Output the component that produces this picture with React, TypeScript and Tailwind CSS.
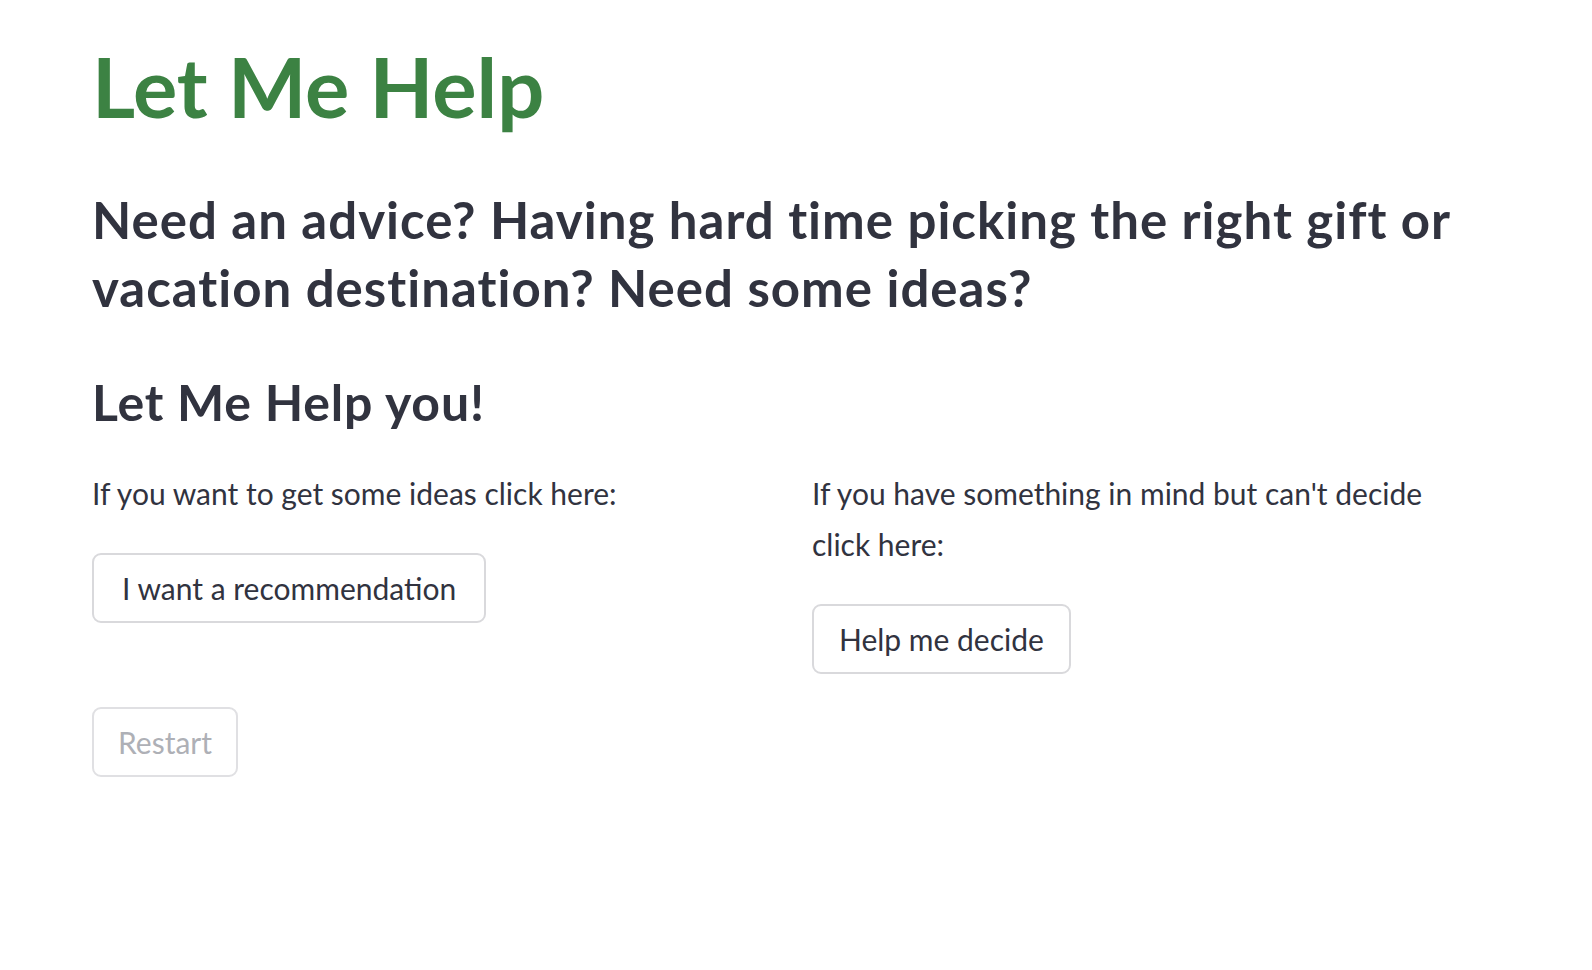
export default function App() {
  return (
    <div className="min-h-screen bg-white font-[family-name:Lato,sans-serif] text-[#31333f]">
      <main className="px-[92px] pt-[38px]">
        {/* Title */}
        <h1 className="text-[83px] leading-[96px] font-bold text-[#3c8243]">Let Me Help</h1>

        <h3 className="mt-[52px] text-[51px] leading-[68px] font-bold tracking-[1px]">
          Need an advice? Having hard time picking the right gift or vacation destination? Need some ideas?
        </h3>

        <h3 className="mt-[46px] text-[50px] leading-[68px] font-bold tracking-[0.8px]">Let Me Help you!</h3>

        {/* Columns */}
        <div className="mt-[32px] grid grid-cols-2 gap-[32px]">
          <div className="flex flex-col items-start">
            <p className="text-[30px] leading-[51px]">If you want to get some ideas click here:</p>
            <button className="mt-[34px] h-[70px] px-[28px] flex items-center rounded-[9px] border-2 border-[#d9d9dc] bg-white text-[30px]">
              I want a recommendation
            </button>
          </div>
          <div className="flex flex-col items-start">
            <p className="max-w-[640px] text-[30px] leading-[51px]">
              If you have something in mind but can't decide click here:
            </p>
            <button className="mt-[34px] h-[70px] px-[25px] flex items-center rounded-[9px] border-2 border-[#d9d9dc] bg-white text-[30px]">
              Help me decide
            </button>
          </div>
        </div>

        <button className="mt-[33px] h-[70px] px-[24px] flex items-center rounded-[9px] border-2 border-[#e0e0e3] bg-white text-[30px] text-[#aeb0b6]">
          Restart
        </button>
      </main>
    </div>
  );
}
